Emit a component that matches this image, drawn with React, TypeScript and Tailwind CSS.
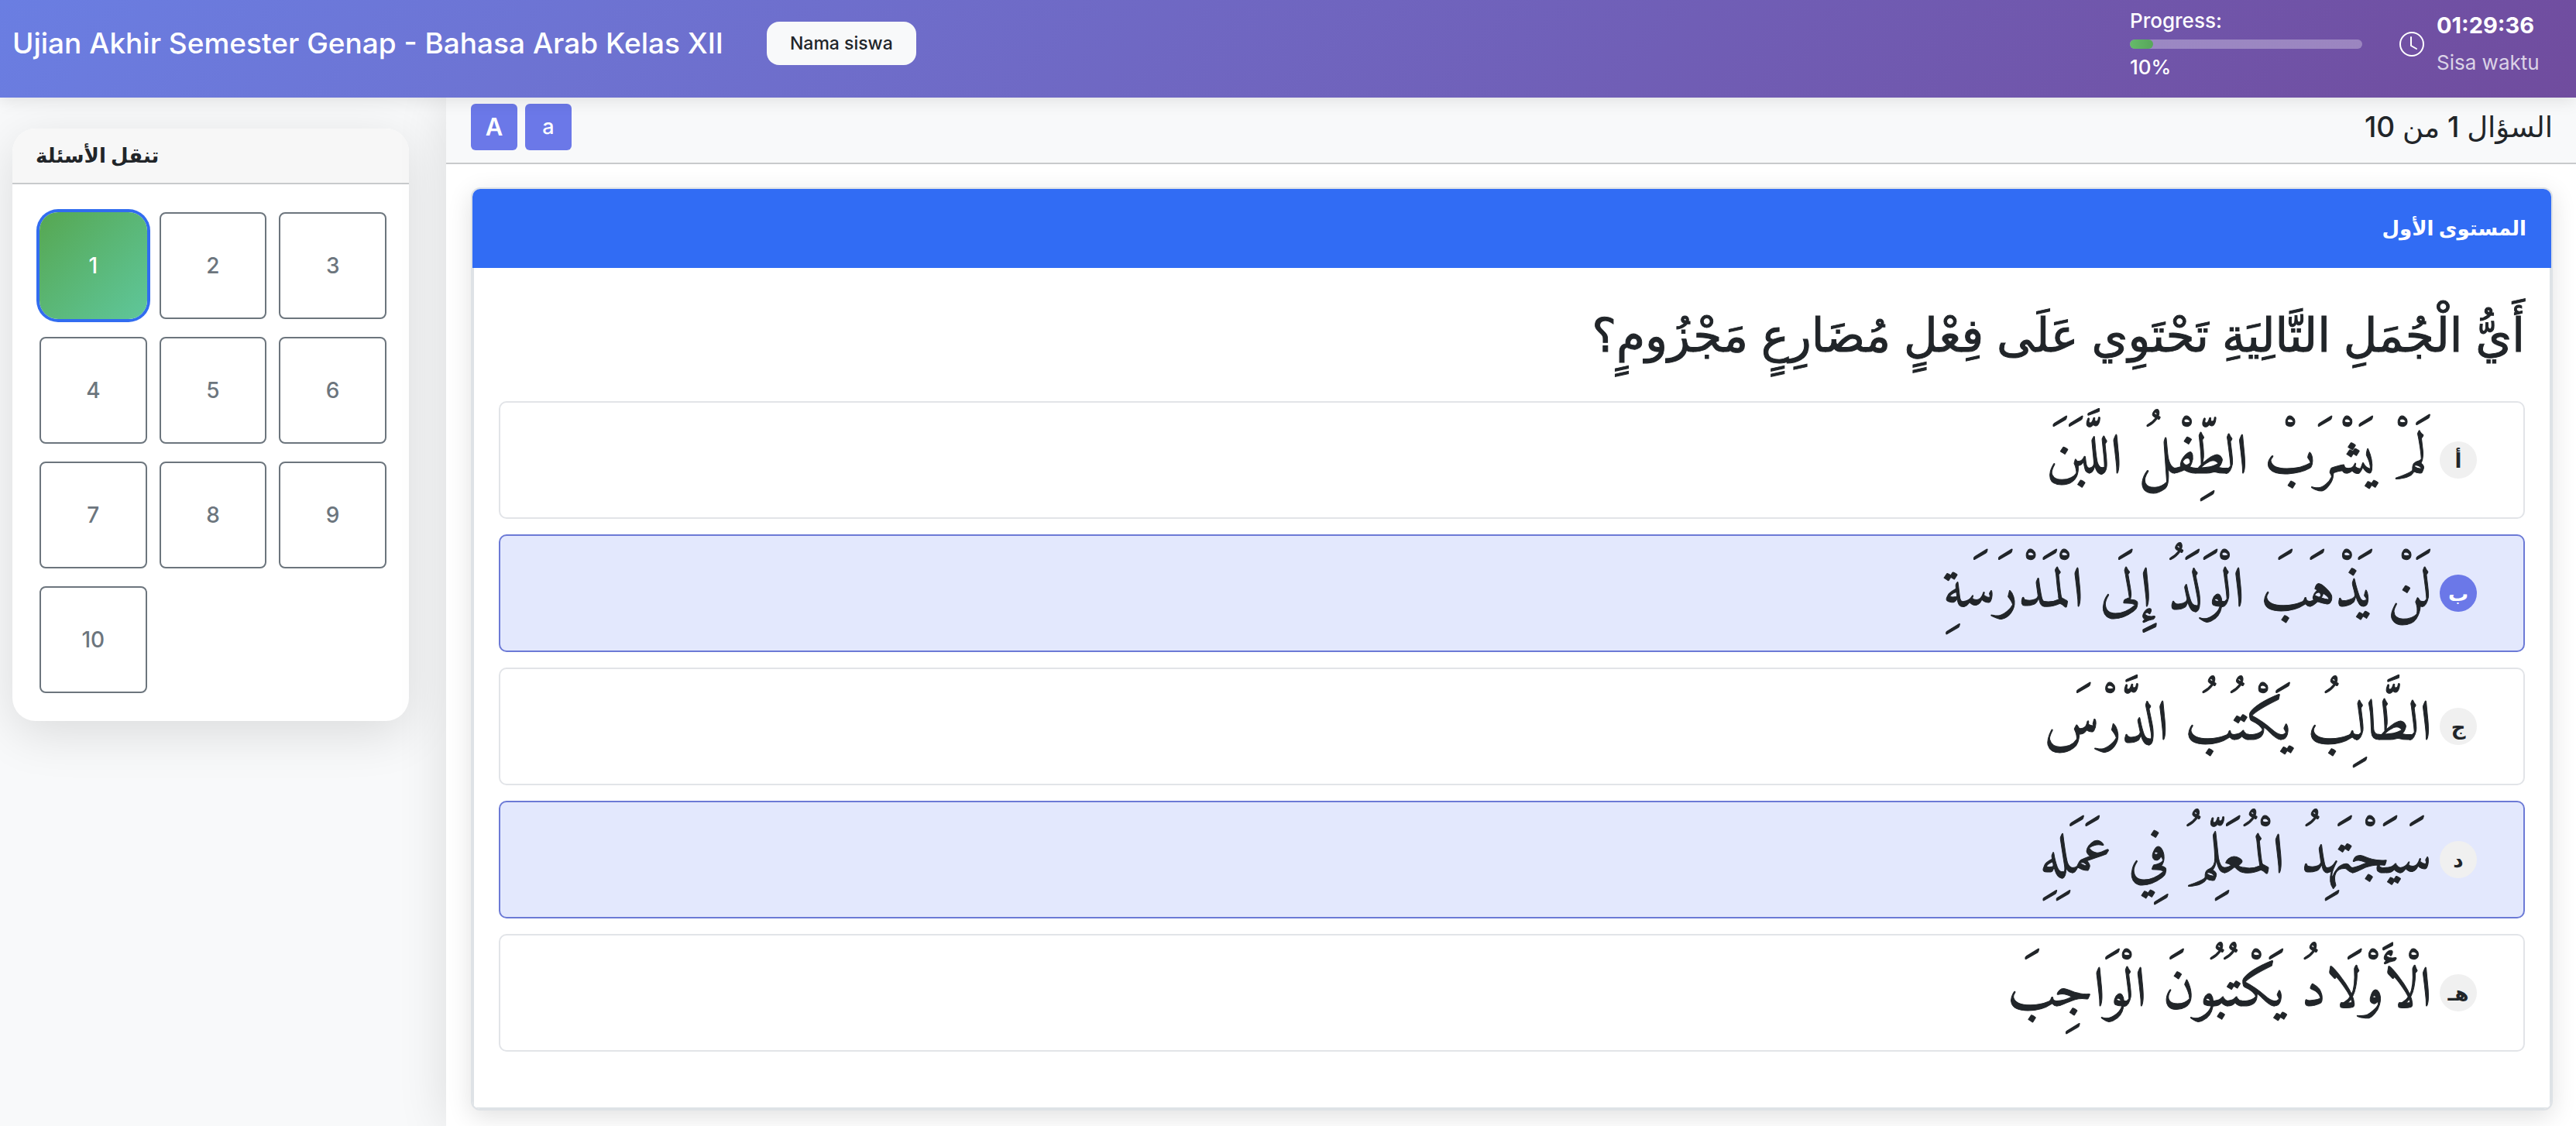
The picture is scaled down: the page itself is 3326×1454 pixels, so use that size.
import { useState } from "react";
import { BsClock } from "react-icons/bs";

const questions = [1, 2, 3, 4, 5, 6, 7, 8, 9, 10];

const options = [
  { key: "أ", text: "لَمْ يَشْرَبْ الطِّفْلُ اللَّبَنَ", selected: false, active: false },
  { key: "ب", text: "لَنْ يَذْهَبَ الْوَلَدُ إِلَى الْمَدْرَسَةِ", selected: true, active: true },
  { key: "ج", text: "الطَّالِبُ يَكْتُبُ الدَّرْسَ", selected: false, active: false },
  { key: "د", text: "سَيَجْتَهِدُ الْمُعَلِّمُ فِي عَمَلِهِ", selected: true, active: false },
  { key: "هـ", text: "الْأَوْلَادُ يَكْتُبُونَ الْوَاجِبَ", selected: false, active: false },
];

function Header() {
  return (
    <header className="relative z-20 flex h-[126px] items-center justify-between bg-linear-135 from-[#6a7ee2] to-[#704c9e] pl-4 pr-12 text-white shadow-[0_4px_20px_rgba(0,0,0,0.1)]">
      <div className="flex items-center gap-14 pb-3.5">
        <h1 className="text-[37px] font-medium leading-[48px]">
          Ujian Akhir Semester Genap - Bahasa Arab Kelas XII
        </h1>
        <button className="h-14 rounded-2xl bg-[#f8f9fa] px-[30px] text-[23px] font-medium text-[#212529]">
          Nama siswa
        </button>
      </div>

      <div className="flex items-center gap-12 pb-3">
        <div className="w-[300px] text-[26px] font-medium leading-[40px]">
          <div id="progress-label">Progress:</div>
          <div
            role="progressbar"
            aria-labelledby="progress-label"
            aria-valuenow={10}
            className="my-1 h-3 overflow-hidden rounded-full bg-white/30"
          >
            <div className="h-full rounded-full bg-linear-90 from-[#66bb6a] to-[#57a65b]" style={{ width: "10%" }} />
          </div>
          <div>10%</div>
        </div>
        <div className="flex items-center gap-4">
          <BsClock className="size-8" />
          <div className="w-[132px] whitespace-nowrap">
            <div className="text-[29px] font-bold leading-[48px]">01:29:36</div>
            <div className="text-[26px] leading-[48px] text-white/75">Sisa waktu</div>
          </div>
        </div>
      </div>
    </header>
  );
}

function Sidebar({ current, onSelect }: { current: number; onSelect: (n: number) => void }) {
  return (
    <aside className="w-[576px] shrink-0 bg-[#f8f9fa] pl-4 pr-12 pt-10">
      <div className="overflow-hidden rounded-[30px] bg-white shadow-[0_16px_64px_rgba(0,0,0,0.12)]">
        <h2
          lang="ar"
          className="h-[72px] border-b-2 border-[#c8cacc] bg-[#f7f7f7] px-[30px] text-[26px] font-bold leading-[70px] text-[#212529]"
        >
          <bdi>تنقل الأسئلة</bdi>
        </h2>
        <nav className="grid grid-cols-3 gap-x-4 gap-y-[23px] py-9 pl-[35px] pr-[29px]">
          {questions.map((n) => (
            <button
              key={n}
              onClick={() => onSelect(n)}
              className={
                n === current
                  ? "h-[138px] rounded-3xl bg-linear-135 from-[#56a750] to-[#5fc79b] text-[28px] font-medium text-white ring-4 ring-[#316cf0]"
                  : "h-[138px] rounded-lg border-2 border-[#6c757d] text-[28px] font-medium text-[#6c757d]"
              }
            >
              {n}
            </button>
          ))}
        </nav>
      </div>
    </aside>
  );
}

function Question() {
  const [checked, setChecked] = useState(options.map((o) => o.selected));

  function toggle(i: number) {
    setChecked(checked.map((c, j) => (j === i ? !c : c)));
  }

  return (
    <section
      dir="rtl"
      lang="ar"
      className="overflow-hidden rounded-xl border-2 border-[#dee2e6] bg-white shadow-[0_8px_32px_rgba(0,0,0,0.12)]"
    >
      <h3 className="h-[102px] bg-[#316cf4] px-8 text-[26px] font-bold leading-[102px] text-white">المستوى الأول</h3>
      <div className="border-2 border-t-0 border-[#dee2e6] px-8 pb-[72px]">
        <p className="h-[172px] whitespace-nowrap text-[60px] leading-[172px] [-webkit-text-stroke:1px]">
          أَيُّ الْجُمَلِ التَّالِيَةِ تَحْتَوِي عَلَى فِعْلٍ مُضَارِعٍ مَجْزُومٍ؟
        </p>
        <div className="flex flex-col gap-5">
          {options.map((o, i) => (
            <label
              key={o.key}
              className={
                checked[i]
                  ? "flex h-[152px] items-center gap-2.5 rounded-[10px] border-2 border-[#6c7ad6] bg-[#e3e8fd] px-[60px]"
                  : "flex h-[152px] items-center gap-2.5 rounded-[10px] border-2 border-[#e2e4e8] px-[60px]"
              }
            >
              <input type="checkbox" className="sr-only" checked={checked[i]} onChange={() => toggle(i)} />
              <span
                className={
                  o.active
                    ? "flex size-12 items-center justify-center rounded-full bg-[#6b78e8] text-[26px] font-bold text-white"
                    : "flex size-12 items-center justify-center rounded-full bg-[#f0f0f0] text-[26px] font-bold"
                }
              >
                {o.key}
              </span>
              <span className="whitespace-nowrap font-['Amiri','DejaVu_Sans',serif] text-[72px] leading-[100px] [-webkit-text-stroke:1px]">
                {o.text}
              </span>
            </label>
          ))}
        </div>
      </div>
    </section>
  );
}

export default function App() {
  const [current, setCurrent] = useState(1);

  return (
    <div className="flex min-h-screen flex-col bg-white font-[Inter,'DejaVu_Sans',sans-serif] text-[#212529]">
      <Header />
      <div className="flex grow">
        <Sidebar current={current} onSelect={setCurrent} />
        <main className="z-10 min-w-0 grow bg-white shadow-[0_0_60px_rgba(0,0,0,0.12)]">
          <div className="flex h-[86px] items-center justify-between border-b-2 border-[#c8cacc] bg-[#f8f9fa] pb-4 pl-8 pr-[30px] pt-2">
            <div className="flex gap-2.5">
              <button className="size-[60px] rounded-md bg-[#6b78e8] text-[31px] font-semibold text-white">A</button>
              <button className="size-[60px] rounded-md bg-[#6b78e8] text-[27px] font-medium text-white">a</button>
            </div>
            <h2 dir="rtl" lang="ar" className="text-[37px] font-medium leading-[48px]">
              السؤال 1 من 10
            </h2>
          </div>
          <div className="pb-5 pl-8 pr-[30px] pt-[30px]">
            <Question />
          </div>
        </main>
      </div>
    </div>
  );
}
